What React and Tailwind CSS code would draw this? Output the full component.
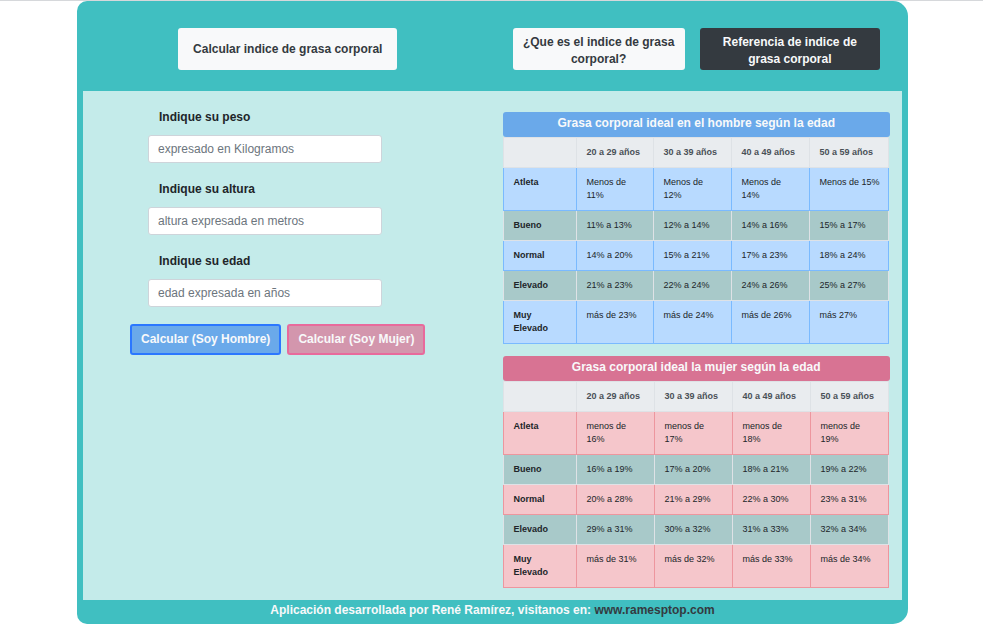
import React from "react";

const AGES = ["20 a 29 años", "30 a 39 años", "40 a 49 años", "50 a 59 años"];

const MEN = [
  ["Atleta", "Menos de 11%", "Menos de 12%", "Menos de 14%", "Menos de 15%"],
  ["Bueno", "11% a 13%", "12% a 14%", "14% a 16%", "15% a 17%"],
  ["Normal", "14% a 20%", "15% a 21%", "17% a 23%", "18% a 24%"],
  ["Elevado", "21% a 23%", "22% a 24%", "24% a 26%", "25% a 27%"],
  ["Muy Elevado", "más de 23%", "más de 24%", "más de 26%", "más 27%"],
];

const WOMEN = [
  ["Atleta", "menos de 16%", "menos de 17%", "menos de 18%", "menos de 19%"],
  ["Bueno", "16% a 19%", "17% a 20%", "18% a 21%", "19% a 22%"],
  ["Normal", "20% a 28%", "21% a 29%", "22% a 30%", "23% a 31%"],
  ["Elevado", "29% a 31%", "30% a 32%", "31% a 33%", "32% a 34%"],
  ["Muy Elevado", "más de 31%", "más de 32%", "más de 33%", "más de 34%"],
];

const FIELDS = [
  { id: "peso", label: "Indique su peso", hint: "expresado en Kilogramos" },
  { id: "altura", label: "Indique su altura", hint: "altura expresada en metros" },
  { id: "edad", label: "Indique su edad", hint: "edad expresada en años" },
];

const PLAIN = { row: "bg-[#a8c9c9]", cell: "border-[#dee2e6]" };
const BLUE = { row: "bg-[#b8daff]", cell: "border-[#7abaff]" };
const PINK = { row: "bg-[#f5c6cb]", cell: "border-[#ed969e]" };

function FatTable({ id, title, titleClass, tone, rows, firstCol }) {
  return (
    <section aria-labelledby={id}>
      <h2
        id={id}
        className={`h-[25px] rounded-[3px] text-center text-[12px] leading-[22px] font-bold text-[#f8f9fa] ${titleClass}`}
      >
        {title}
      </h2>
      <div className="pr-px">
        <table className="w-full table-fixed border-collapse text-left align-top text-[9px] leading-[13px] text-[#212529]">
          <colgroup>
            <col className="w-[73px]" />
            <col className={firstCol} />
            <col className="w-[78px]" />
            <col className="w-[78px]" />
            <col />
          </colgroup>
          <thead className="bg-[#e9ecef] text-[#495057]">
            <tr>
              <td className="border border-[#dee2e6]" />
              {AGES.map((age) => (
                <th key={age} scope="col" className="border border-[#dee2e6] py-2 pr-2 pl-2.5 font-bold">
                  {age}
                </th>
              ))}
            </tr>
          </thead>
          <tbody>
            {rows.map(([name, ...values], i) => {
              const style = i % 2 === 0 ? tone : PLAIN;
              return (
                <tr key={name} className={style.row}>
                  <th scope="row" className={`border py-2 pr-2 pl-2.5 align-top font-bold ${style.cell}`}>
                    {name}
                  </th>
                  {values.map((value, j) => (
                    <td key={j} className={`border py-2 pr-2 pl-2.5 align-top ${style.cell}`}>
                      {value}
                    </td>
                  ))}
                </tr>
              );
            })}
          </tbody>
        </table>
      </div>
    </section>
  );
}

export default function App() {
  return (
    <div className="border-t border-[#d6d8db] bg-white pr-[75px] pl-[77px] font-['Liberation_Sans',Arial,sans-serif] text-[12px]">
      <div className="rounded-l-[10px] rounded-r-[15px] bg-[#40bfc1] px-1.5">
        <header className="grid h-[90px] grid-cols-2 items-center pt-1.5 leading-[17px] font-bold">
          <div className="flex justify-center">
            <button type="button" className="h-[42px] rounded-[3px] bg-[#f8f9fa] px-[15px] text-[#343a40]">
              Calcular indice de grasa corporal
            </button>
          </div>
          <div className="grid grid-cols-[172fr_180fr] gap-[15px] pr-[22px] pl-5">
            <button type="button" className="h-[42px] rounded-[3px] bg-[#f8f9fa] px-2 pt-1 text-[#343a40]">
              ¿Que es el indice de grasa corporal?
            </button>
            <button type="button" className="h-[42px] rounded-[3px] bg-[#343a40] px-5 pt-1 text-[#f8f9fa]">
              Referencia de indice de grasa corporal
            </button>
          </div>
        </header>

        <main className="grid grid-cols-2 bg-[#c4ebea]">
          <form className="pt-[17px] pl-[47px]" onSubmit={(e) => e.preventDefault()}>
            <div className="flex flex-col gap-[17px] pl-[18px]">
              {FIELDS.map((f) => (
                <div key={f.id} className="flex flex-col gap-[9px]">
                  <label htmlFor={f.id} className="pl-[11px] leading-[18px] font-bold text-[#212529]">
                    {f.label}
                  </label>
                  <input
                    id={f.id}
                    type="text"
                    placeholder={f.hint}
                    className="h-7 w-[234px] rounded-[3px] border border-[#ced4da] bg-white px-[9px] text-[#495057] placeholder:text-[#6c757d]"
                  />
                </div>
              ))}
            </div>
            <div className="mt-[17px] flex gap-1.5 leading-[17px] font-bold text-[#f8f9fa]">
              <button type="submit" className="h-[31px] rounded-[3px] border-2 border-[#2b77ff] bg-[#6aa9ea] px-[9px]">
                Calcular (Soy Hombre)
              </button>
              <button type="submit" className="h-[31px] rounded-[3px] border-2 border-[#e86a9c] bg-[#d396ad] px-[9px]">
                Calcular (Soy Mujer)
              </button>
            </div>
          </form>

          <div className="flex flex-col gap-3 pt-[21px] pr-3 pb-3 pl-2.5">
            <FatTable
              id="hombre"
              title="Grasa corporal ideal en el hombre según la edad"
              titleClass="bg-[#6aa9ea]"
              tone={BLUE}
              rows={MEN}
              firstCol="w-[77px]"
            />
            <FatTable
              id="mujer"
              title="Grasa corporal ideal la mujer según la edad"
              titleClass="bg-[#d87393]"
              tone={PINK}
              rows={WOMEN}
              firstCol="w-[78px]"
            />
          </div>
        </main>

        <footer className="pt-px pb-[5px] text-center leading-[18px] font-bold text-[#f8f9fa]">
          Aplicación desarrollada por René Ramírez, visitanos en:{" "}
          <a href="#" className="text-[#343a40]">
            www.ramesptop.com
          </a>
        </footer>
      </div>
    </div>
  );
}
